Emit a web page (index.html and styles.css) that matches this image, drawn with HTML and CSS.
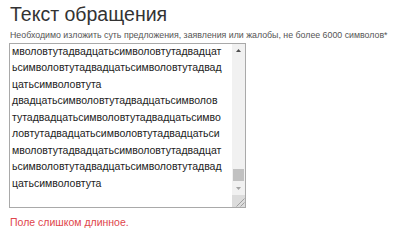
FILE: index.html
```html
<!DOCTYPE html>
<html lang="ru">
<head>
<meta charset="utf-8">
<title>Текст обращения</title>
<link rel="stylesheet" href="styles.css">
</head>
<body>
<div class="page">
  <h1 class="title">Текст обращения</h1>
  <label class="hint" for="msg">Необходимо изложить суть предложения, заявления или жалобы, не более 6000 символов*</label>
  <div class="field">
    <textarea id="msg" class="message">двадцатьсимволовтутадвадцатьсимволов
тутадвадцатьсимволовтутадвадцатьсимво
ловтутадвадцатьсимволовтутадвадцатьси
мволовтутадвадцатьсимволовтутадвадцат
ьсимволовтутадвадцатьсимволовтутадвад
цатьсимволовтута
двадцатьсимволовтутадвадцатьсимволов
тутадвадцатьсимволовтутадвадцатьсимво
ловтутадвадцатьсимволовтутадвадцатьси
мволовтутадвадцатьсимволовтутадвадцат
ьсимволовтутадвадцатьсимволовтутадвад
цатьсимволовтута
двадцатьсимволовтутадвадцатьсимволов
тутадвадцатьсимволовтутадвадцатьсимво
ловтутадвадцатьсимволовтутадвадцатьси
мволовтутадвадцатьсимволовтутадвадцат
ьсимволовтутадвадцатьсимволовтутадвад
цатьсимволовтута
двадцатьсимволовтутадвадцатьсимволов
тутадвадцатьсимволовтутадвадцатьсимво
ловтутадвадцатьсимволовтутадвадцатьси
мволовтутадвадцатьсимволовтутадвадцат
ьсимволовтутадвадцатьсимволовтутадвад
цатьсимволовтута
двадцатьсимволовтутадвадцатьсимволов
тутадвадцатьсимволовтутадвадцатьсимво
ловтутадвадцатьсимволовтутадвадцатьси
мволовтутадвадцатьсимволовтутадвадцат
ьсимволовтутадвадцатьсимволовтутадвад
цатьсимволовтута
двадцатьсимволовтутадвадцатьсимволов
тутадвадцатьсимволовтутадвадцатьсимво
ловтутадвадцатьсимволовтутадвадцатьси
мволовтутадвадцатьсимволовтутадвадцат
ьсимволовтутадвадцатьсимволовтутадвад
цатьсимволовтута
двадцатьсимволовтутадвадцатьсимволов
тутадвадцатьсимволовтутадвадцатьсимво
ловтутадвадцатьсимволовтутадвадцатьси
мволовтутадвадцатьсимволовтутадвадцат
ьсимволовтутадвадцатьсимволовтутадвад
цатьсимволовтута
двадцатьсимволовтутадвадцатьсимволов
тутадвадцатьсимволовтутадвадцатьсимво
ловтутадвадцатьсимволовтутадвадцатьси
мволовтутадвадцатьсимволовтутадвадцат
ьсимволовтутадвадцатьсимволовтутадвад
цатьсимволовтута
двадцатьсимволовтутадвадцатьсимволов
тутадвадцатьсимволовтутадвадцатьсимво
ловтутадвадцатьсимволовтутадвадцатьси
мволовтутадвадцатьсимволовтутадвадцат
ьсимволовтутадвадцатьсимволовтутадвад
цатьсимволовтута
</textarea>
    <div class="scrollbar" aria-hidden="true">
      <div class="sb-button">
        <svg width="5" height="3" viewBox="0 0 5 3"><polygon points="0,3 2.5,0 5,3" fill="#505050"/></svg>
      </div>
      <div class="sb-track">
        <div class="sb-thumb"></div>
      </div>
      <div class="sb-button">
        <svg width="5" height="3" viewBox="0 0 5 3"><polygon points="0,0 5,0 2.5,3" fill="#a3a3a3"/></svg>
      </div>
      <div class="sb-corner">
        <svg width="12" height="12" viewBox="0 0 12 12"><line x1="11.5" y1="3.5" x2="3.5" y2="11.5" stroke="#a0a0a0" stroke-width="1"/><line x1="11.5" y1="7.5" x2="7.5" y2="11.5" stroke="#a0a0a0" stroke-width="1"/></svg>
      </div>
    </div>
  </div>
  <div class="error">Поле слишком длинное.</div>
</div>
<script src="script.js"></script>
</body>
</html>
```

FILE: styles.css
```css
html, body {
  margin: 0;
  padding: 0;
  background: #ffffff;
}

.page {
  display: flex;
  flex-direction: column;
  align-items: flex-start;
  padding: 2px 9px 0 9px;
  font-family: "Liberation Sans", Arial, sans-serif;
}

.title {
  margin: 0 0 0 1px;
  font-size: 19.5px;
  line-height: 24px;
  font-weight: normal;
  color: #333333;
}

.hint {
  margin: 3px 0 0 1px;
  font-size: 8.8px;
  line-height: 12px;
  white-space: nowrap;
  color: #555555;
}

.field {
  margin-top: 2px;
  display: flex;
  width: 237px;
  height: 165px;
  box-sizing: border-box;
  border: 1px solid #a9a9a9;
  background: #ffffff;
}

.message {
  flex: 1;
  min-width: 0;
  margin: 0;
  border: none;
  padding: 2px;
  font-family: "Liberation Sans", Arial, sans-serif;
  font-size: 10.5px;
  line-height: 16.5px;
  color: #222222;
  background: #ffffff;
  overflow: hidden;
  resize: none;
  outline: none;
}

.scrollbar {
  width: 13px;
  flex: none;
  display: flex;
  flex-direction: column;
  background: #f1f1f1;
}

.sb-button {
  height: 13px;
  flex: none;
  display: flex;
  align-items: center;
  justify-content: center;
}

.sb-track {
  flex: 1;
  display: flex;
  flex-direction: column;
  justify-content: flex-end;
  padding: 0 1px 1px 1px;
}

.sb-thumb {
  height: 12px;
  background: #c1c1c1;
}

.sb-corner {
  height: 12px;
  flex: none;
  background: #dcdcdc;
  display: flex;
  justify-content: flex-end;
  align-items: flex-end;
}

.sb-corner svg {
  display: block;
}

.error {
  margin: 7px 0 0 1px;
  font-size: 10.5px;
  line-height: 14px;
  color: #e0454b;
}
```

FILE: script.js
```js
var box = document.getElementById('msg');
box.scrollTop = box.scrollHeight - box.clientHeight - 3;
```
